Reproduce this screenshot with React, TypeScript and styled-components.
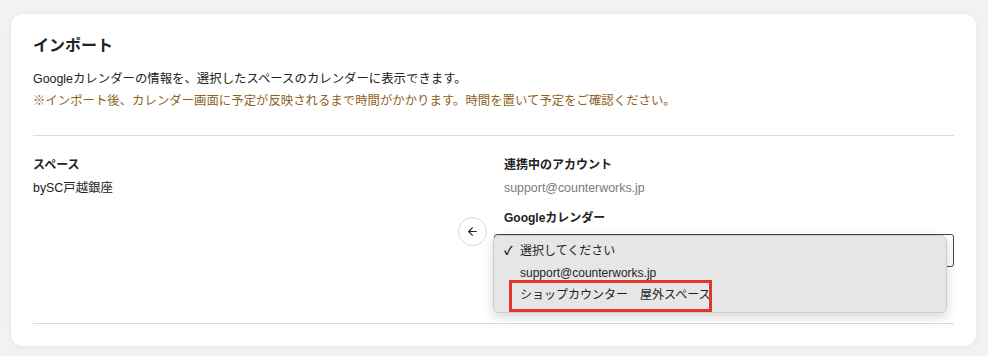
import styled, { createGlobalStyle } from 'styled-components';

const GlobalStyle = createGlobalStyle`
  html, body {
    margin: 0;
    background: #f2f2f2;
  }
  body {
    font-family: 'Liberation Sans', 'Noto Sans CJK JP', sans-serif;
    color: #222;
  }
`;

const calendars = ['選択してください', 'support@counterworks.jp', 'ショップカウンター　屋外スペース'];

function App() {
  return (
    <>
      <GlobalStyle />
      <Page>
        <Card>
          <Title>インポート</Title>
          <Description>Googleカレンダーの情報を、選択したスペースのカレンダーに表示できます。</Description>
          <Notice>※インポート後、カレンダー画面に予定が反映されるまで時間がかかります。時間を置いて予定をご確認ください。</Notice>
          <Divider $top={23} />
          <Body>
            <Column>
              <Label>スペース</Label>
              <Value>bySC戸越銀座</Value>
            </Column>
            <ArrowButton aria-label="import">
              <svg width="13" height="13" viewBox="0 0 24 24" fill="none" stroke="#222" strokeWidth="2" strokeLinecap="round" strokeLinejoin="round">
                <path d="M19 12H5" />
                <path d="M12 19l-7-7 7-7" />
              </svg>
            </ArrowButton>
            <Column>
              <Fields>
                <Label>連携中のアカウント</Label>
                <Value $muted>support@counterworks.jp</Value>
                <Label $gap={10}>Googleカレンダー</Label>
              </Fields>
              <SelectBox>
                <Dropdown>
                  {calendars.map((name, i) => (
                    <Option key={name} $checked={i === 0}>
                      {name}
                      {i === calendars.length - 1 && <Highlight />}
                    </Option>
                  ))}
                </Dropdown>
              </SelectBox>
            </Column>
          </Body>
          <Divider $top={56} />
        </Card>
      </Page>
    </>
  );
}

const Page = styled.div`
  padding: 14px 12px 10px 11px;
`;

const Card = styled.div`
  background: #fff;
  border-radius: 12px;
  padding: 20px 22px 22px;
  box-shadow: 0 1px 6px rgba(0, 0, 0, 0.06);
`;

const Title = styled.h2`
  margin: 0;
  font-size: 16px;
  line-height: 24px;
  font-weight: 700;
  color: #222;
`;

const Description = styled.p`
  margin: 10px 0 0;
  font-size: 12.4px;
  line-height: 22px;
  color: #222;
`;

const Notice = styled.p`
  margin: 0;
  font-size: 12.4px;
  line-height: 22px;
  color: #8f5f1c;
`;

const Divider = styled.hr<{ $top: number }>`
  margin: ${({ $top }) => $top}px 0 0;
  border: none;
  border-top: 1px solid #dadada;
`;

const Body = styled.div`
  display: grid;
  grid-template-columns: 1fr 36px 460px;
  margin-top: 19px;
`;

const Column = styled.div`
  display: flex;
  flex-direction: column;
`;

const Fields = styled.div`
  display: flex;
  flex-direction: column;
  padding-left: 10px;
`;

const Label = styled.div<{ $gap?: number }>`
  margin-top: ${({ $gap }) => $gap ?? 0}px;
  font-size: 12px;
  line-height: 20px;
  font-weight: 700;
  color: #222;
`;

const Value = styled.div<{ $muted?: boolean }>`
  margin-top: 3px;
  font-size: 12.4px;
  line-height: 20px;
  color: ${({ $muted }) => ($muted ? '#7a7a7a' : '#222')};
`;

const ArrowButton = styled.button`
  justify-self: start;
  width: 29px;
  height: 29px;
  margin-top: 62px;
  padding: 0;
  border: 1px solid #d6d6d6;
  border-radius: 50%;
  background: #fff;
  display: flex;
  align-items: center;
  justify-content: center;
`;

const SelectBox = styled.div`
  position: relative;
  margin-top: 6px;
  height: 33px;
  box-sizing: border-box;
  border: 1px solid #34495e;
  border-radius: 3px;
`;

const Dropdown = styled.div`
  position: absolute;
  left: -2px;
  top: 0;
  width: 454px;
  box-sizing: border-box;
  padding: 4px 0 6px;
  background: #e6e6e6;
  border: 1px solid #cdcdcd;
  border-radius: 6px;
  box-shadow: 0 4px 12px rgba(0, 0, 0, 0.16);
`;

const Option = styled.div<{ $checked?: boolean }>`
  position: relative;
  padding-left: 26px;
  font-size: 12px;
  line-height: 22px;
  color: #1e1e1e;

  &::before {
    content: ${({ $checked }) => ($checked ? "'✓'" : 'none')};
    position: absolute;
    left: 10px;
    top: 0;
    font-size: 12px;
    font-weight: 700;
  }
`;

const Highlight = styled.span`
  position: absolute;
  left: 15px;
  top: -4px;
  width: 203px;
  height: 32px;
  box-sizing: border-box;
  border: 3px solid #e0362c;
`;

export default App;
